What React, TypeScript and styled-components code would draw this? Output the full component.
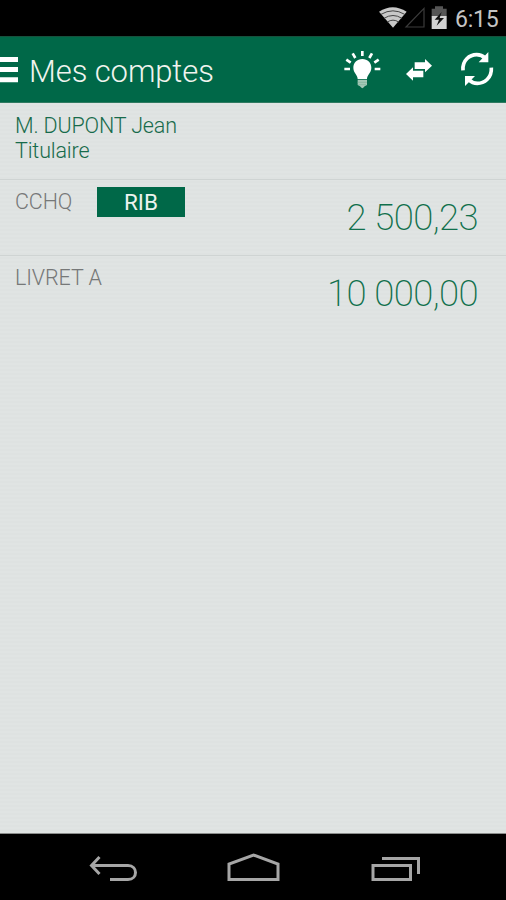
import React from "react";
import styled, { createGlobalStyle } from "styled-components";

const GlobalStyle = createGlobalStyle`
  * { box-sizing: border-box; }
  body { margin: 0; background: #000; }
`;

const Screen = styled.div`
  width: 506px;
  height: 900px;
  display: flex;
  flex-direction: column;
  overflow: hidden;
  background: #dfe3e2;
  font-family: Roboto, "Liberation Sans", sans-serif;
  font-weight: 300;
`;

const StatusBar = styled.div`
  height: 36px;
  flex: none;
  display: flex;
  align-items: flex-start;
  justify-content: flex-end;
  padding-right: 7px;
  background: #000;
`;

const Clock = styled.span`
  width: 44px;
  margin-left: 6px;
  padding-top: 8px;
  font-size: 23px;
  line-height: 24px;
  font-weight: 400;
  letter-spacing: -0.2px;
  color: #c4c4c4;
  white-space: nowrap;
`;

const Header = styled.header`
  height: 67px;
  flex: none;
  display: flex;
  background: #006848;
  border-top: 1px solid #17513d;
  border-bottom: 1px solid #2f7a61;
`;

const Title = styled.h1`
  flex: 1;
  margin: 0;
  padding: 16px 0 0 9px;
  font-size: 31px;
  line-height: 38px;
  font-weight: 300;
  letter-spacing: -0.1px;
  color: #f1f4ef;
  white-space: nowrap;
`;

const Content = styled.main`
  flex: 1;
  display: flex;
  flex-direction: column;
  background: repeating-linear-gradient(#e0e4e3 0 2px, #dee2e1 2px 4px);
`;

const Owner = styled.div`
  height: 77px;
  padding: 10px 15px 0;
  font-size: 21.5px;
  line-height: 25px;
  color: #176b4b;
  border-bottom: 1px solid #cfd4d3;
`;

const OwnerLine = styled.div`
  letter-spacing: -0.15px;
`;

const Account = styled.div<{ $last?: boolean }>`
  height: 76px;
  display: flex;
  align-items: flex-start;
  padding: 7px 28px 0 15px;
  border-bottom: ${(p) => (p.$last ? "none" : "1px solid #cfd4d3")};
`;

const AccountName = styled.span<{ $width: number }>`
  width: ${(p) => p.$width}px;
  padding-top: 2px;
  font-size: 21.5px;
  line-height: 26px;
  letter-spacing: -0.1px;
  color: #767878;
  white-space: nowrap;
`;

const RibButton = styled.button`
  width: 88px;
  height: 30px;
  padding: 1px 0 0;
  border: 0;
  background: #006848;
  color: #edf3ee;
  font: 400 22.5px/29px Roboto, sans-serif;
`;

const Amount = styled.span`
  margin-left: auto;
  padding-top: 9px;
  font-size: 36.5px;
  line-height: 44px;
  font-weight: 200;
  letter-spacing: -0.6px;
  color: #10704c;
  white-space: nowrap;
`;

const NavBar = styled.nav`
  height: 67px;
  flex: none;
  display: flex;
  background: #000;
  border-top: 1px solid #8b8d8c;
`;

const Icon = styled.svg`
  display: block;
  flex: none;
`;

const StatusIcons = () => (
  <Icon width="70" height="36" viewBox="0 0 210 108">
    <path d="M0 35Q41 8 83 35L42 83Z" fill="#c8c8c8" />
    <g fill="none" stroke="#444" strokeWidth="3">
      <path d="M6 43Q42 22 77 43M15 55Q42 38 69 55M25 66Q42 55 59 66" />
    </g>
    <path d="M81 81H135V25Z" fill="none" stroke="#3c3c3c" strokeWidth="3.5" />
    <path d="M158 26H168V19H192V26H203V49H158Z" fill="#555" />
    <path d="M158 48H203V87H158Z" fill="#d2d2d2" />
    <path d="M188 36L167 59H180L173 77L195 54H182Z" fill="#111" />
  </Icon>
);

const MenuIcon = () => (
  <Icon width="20" height="65" viewBox="0 0 60 195">
    <path d="M0 60H54V75H0ZM0 90H54V105H0ZM0 121H54V136H0Z" fill="#fff" />
  </Icon>
);

const ActionIcons = () => (
  <Icon width="176" height="65" viewBox="0 3 528 195">
    <g fill="none" stroke="#fff" strokeWidth="8">
      <path d="M97 45V60M68 52L76 66M126 52L118 66M49 71L62 80M146 71L133 80M43 99H60M134 99H151" />
    </g>
    <path d="M97 69C81 69 70 81 70 95C70 111 83 116 83 129H111C111 116 124 111 124 95C124 81 113 69 97 69Z" fill="#fff" />
    <path d="M83 131H111V147L104 151Q97 162 90 151L83 147Z" fill="#a4c8b7" />
    <path d="M83 139H111M85 146H109" stroke="#7fb09a" strokeWidth="2" />
    <path d="M254 79H285V69L306 89L285 109V99H254Z" fill="#fff" />
    <path d="M280 104H249V94L228 114L249 134V124H280Z" fill="#fff" />
    <g fill="none" stroke="#fff" strokeWidth="11">
      <path d="M399 103C396 73 419 56 440 56C451 56 459 60 466 67" />
      <path d="M484 95C486 127 462 142 442 142C431 142 423 138 416 131" />
    </g>
    <path d="M475 48V79H446ZM405 150V120H435Z" fill="#fff" />
  </Icon>
);

const NavIcons = () => (
  <Icon width="506" height="66" viewBox="0 834 506 66">
    <g fill="none" stroke="#a6a6a6" strokeWidth="3">
      <path d="M99.5 857L91.5 865.5L99.5 874M91 865.5H128C138 865.5 138 879.5 128 879.5H110" />
      <path d="M229 879.5V864L253.5 855L278 864V879.5Z" />
      <path d="M373 865.5H410.5V879.5H373ZM382 858.5H418.5V874" />
    </g>
  </Icon>
);

export default function App() {
  return (
    <>
      <GlobalStyle />
      <Screen>
        <StatusBar>
          <StatusIcons />
          <Clock>6:15</Clock>
        </StatusBar>
        <Header>
          <MenuIcon />
          <Title>Mes comptes</Title>
          <ActionIcons />
        </Header>
        <Content>
          <Owner>
            <OwnerLine>M. DUPONT Jean</OwnerLine>
            <OwnerLine>Titulaire</OwnerLine>
          </Owner>
          <Account>
            <AccountName $width={82}>CCHQ</AccountName>
            <RibButton>RIB</RibButton>
            <Amount>2 500,23</Amount>
          </Account>
          <Account $last>
            <AccountName $width={120}>LIVRET A</AccountName>
            <Amount>10 000,00</Amount>
          </Account>
        </Content>
        <NavBar>
          <NavIcons />
        </NavBar>
      </Screen>
    </>
  );
}
